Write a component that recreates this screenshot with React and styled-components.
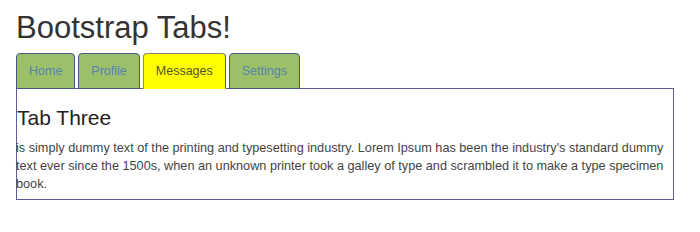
import React, { useState } from "react"
import styled, { createGlobalStyle } from "styled-components"

const GlobalStyle = createGlobalStyle`
  body {
    margin: 0;
    background: #fff;
    font-family: "Liberation Sans", Arial, sans-serif;
    color: #333;
  }
`

const Page = styled.div`
  padding: 8px 26px 0 16px;
`

const Title = styled.h1`
  margin: 0 0 5px;
  font-size: 31px;
  font-weight: 400;
  line-height: 40px;
  color: #333;
`

const TabList = styled.ul`
  display: flex;
  gap: 3px;
  list-style: none;
  margin: 0;
  padding: 0;
  position: relative;
  z-index: 1;
`

const Tab = styled.li`
  margin-bottom: -1px;

  button {
    display: block;
    height: 36px;
    padding: 0 12px;
    font-family: inherit;
    font-size: 12.5px;
    cursor: pointer;
    border: 1px solid #4a5584;
    border-radius: 4px 4px 0 0;
    background: ${(p) => (p.$active ? "#ffff00" : "#9cc06a")};
    color: ${(p) => (p.$active ? "#555533" : "#5584ad")};
    border-color: ${(p) => (p.$active ? "#8a8a7a #4a5584 #ffff00 #8a8a7a" : "#4a5584")};
  }
`

const Panel = styled.div`
  border: 1px solid #5d5d97;
  padding: 0 0 6px;
`

const PanelTitle = styled.h3`
  margin: 17px 0 9px;
  font-size: 21px;
  font-weight: 400;
  line-height: 24px;
  color: #222;
`

const Text = styled.p`
  margin: 0 4px 0 -1px;
  font-size: 12.7px;
  line-height: 18px;
  color: #444;
`

const tabs = ["Home", "Profile", "Messages", "Settings"]

const App = () => {
  const [active, setActive] = useState("Messages")
  return (
    <>
      <GlobalStyle />
      <Page>
        <Title>Bootstrap Tabs!</Title>
        <TabList>
          {tabs.map((t) => (
            <Tab key={t} $active={t === active}>
              <button onClick={() => setActive(t)}>{t}</button>
            </Tab>
          ))}
        </TabList>
        <Panel>
          <PanelTitle>Tab Three</PanelTitle>
          <Text>
            is simply dummy text of the printing and typesetting industry. Lorem Ipsum has been the
            industry's standard dummy text ever since the 1500s, when an unknown printer took a galley
            of type and scrambled it to make a type specimen book.
          </Text>
        </Panel>
      </Page>
    </>
  )
}

export default App
